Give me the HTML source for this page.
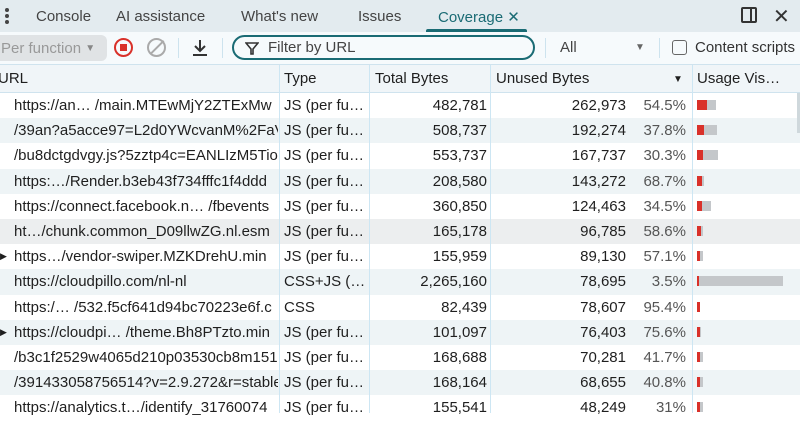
<!DOCTYPE html><html><head><style>
*{margin:0;padding:0;box-sizing:border-box}
body{width:800px;height:413px;overflow:hidden;background:#fff;font-family:"Liberation Sans","DejaVu Sans",sans-serif;font-size:15px;color:#1f1f1f;position:relative}
.abs{position:absolute;white-space:nowrap}
#tabs{position:absolute;left:0;top:0;width:800px;height:32px;background:#e3ebef}
#tb{position:absolute;left:0;top:32px;width:800px;height:33px;background:#f6fafc;border-bottom:1px solid #cfe3ee}
#hdr{position:absolute;left:0;top:65px;width:800px;height:28px;background:#f0f5f8;border-bottom:1px solid #cfe3ee}
.row{position:absolute;left:0;width:800px;height:25.2px}
.row span{position:absolute;top:4px;white-space:nowrap;overflow:hidden}
.vl{position:absolute;top:65px;width:1px;height:348px;background:#cde6f3}
</style></head><body>
<div id="tabs">
<div class="abs" style="left:5px;top:8px;width:4px;height:16px">
<div style="width:4px;height:4px;border-radius:2px;background:#444;margin-bottom:2px"></div><div style="width:4px;height:4px;border-radius:2px;background:#444;margin-bottom:2px"></div><div style="width:4px;height:4px;border-radius:2px;background:#444"></div></div>
<div class="abs" style="left:36px;top:8px;color:#444">Console</div>
<div class="abs" style="left:116px;top:8px;color:#444">AI assistance</div>
<div class="abs" style="left:241px;top:8px;color:#444">What's new</div>
<div class="abs" style="left:358px;top:8px;color:#444">Issues</div>
<div class="abs" style="left:438px;top:8px;color:#1a6b74">Coverage ✕</div>
<div class="abs" style="left:426px;top:29px;width:101px;height:3px;background:#1a6b74;border-radius:2px 2px 0 0"></div>
<div class="abs" style="left:741px;top:7px;width:16px;height:16px;border:2px solid #333;border-radius:2px"><div style="position:absolute;left:7px;top:0;width:2px;height:12px;background:#333"></div></div>
<div class="abs" style="left:773px;top:4px;font-size:20px;color:#333">✕</div>
</div>
<div id="tb">
<div class="abs" style="left:0;top:3px;width:107px;height:26px;background:#e0e3e5;border-radius:0 6px 6px 0;color:#999;padding:5px 0 0 1px">Per function <span style="font-size:10px;color:#888;position:relative;top:-2px">▼</span></div>
<div class="abs" style="left:114px;top:6px;width:19px;height:19px;border:2px solid #d9312a;border-radius:50%"><div style="position:absolute;left:4px;top:4px;width:7px;height:7px;background:#d9312a"></div></div>
<div class="abs" style="left:147px;top:6px;width:19px;height:19px;border:2px solid #aaa;border-radius:50%"><div style="position:absolute;left:7px;top:-2px;width:2px;height:19px;background:#aaa;transform:rotate(45deg)"></div></div>
<div class="abs" style="left:178px;top:6px;width:1px;height:20px;background:#cde3ee"></div>
<svg class="abs" style="left:191px;top:6px" width="18" height="20"><path d="M9 2v11M4 8l5 5 5-5M2 17h14" stroke="#333" stroke-width="2" fill="none"/></svg>
<div class="abs" style="left:222px;top:6px;width:1px;height:20px;background:#cde3ee"></div>
<div class="abs" style="left:232px;top:3px;width:303px;height:25px;border:2px solid #1a6b74;border-radius:13px;padding:2px 0 0 34px;color:#444">Filter by URL</div>
<svg class="abs" style="left:245px;top:9px" width="14" height="14"><path d="M1 2h12L8 8v5H6V8z" stroke="#333" stroke-width="1.6" fill="none"/></svg>
<div class="abs" style="left:545px;top:6px;width:1px;height:20px;background:#cde3ee"></div>
<div class="abs" style="left:560px;top:7px;color:#444">All</div>
<div class="abs" style="left:635px;top:10px;font-size:10px;color:#666">▼</div>
<div class="abs" style="left:659px;top:6px;width:1px;height:20px;background:#cde3ee"></div>
<div class="abs" style="left:672px;top:8px;width:15px;height:15px;border:1.5px solid #666;border-radius:3px"></div>
<div class="abs" style="left:695px;top:7px;color:#333">Content scripts</div>
</div>
<div id="hdr">
<div class="abs" style="left:-2px;top:5px">URL</div>
<div class="abs" style="left:284px;top:5px">Type</div>
<div class="abs" style="left:375px;top:5px">Total Bytes</div>
<div class="abs" style="left:496px;top:5px">Unused Bytes</div>
<div class="abs" style="left:673px;top:9px;font-size:10px">▼</div>
<div class="abs" style="left:697px;top:5px">Usage Vis…</div>
</div>
<div id="rows"></div>
<div class="vl" style="left:279px"></div>
<div class="vl" style="left:369px"></div>
<div class="vl" style="left:490px"></div>
<div class="vl" style="left:692px"></div>
<div class="abs" style="left:797px;top:93px;width:3px;height:40px;background:#cfd8dc"></div>
<script>
var d=[
["https://an…  /main.MTEwMjY2ZTExMw","JS (per fu…","482,781","262,973","54.5%",10,19,0],
["/39an?a5acce97=L2d0YWcvanM%2FaV","JS (per fu…","508,737","192,274","37.8%",7,20,0],
["/bu8dctgdvgy.js?5zztp4c=EANLIzM5Tio","JS (per fu…","553,737","167,737","30.3%",6,21,0],
["https:…/Render.b3eb43f734fffc1f4ddd","JS (per fu…","208,580","143,272","68.7%",5,7,0],
["https://connect.facebook.n…  /fbevents","JS (per fu…","360,850","124,463","34.5%",5,14,0],
["ht…/chunk.common_D09llwZG.nl.esm","JS (per fu…","165,178","96,785","58.6%",4,6,0],
["https…/vendor-swiper.MZKDrehU.min","JS (per fu…","155,959","89,130","57.1%",3,6,1],
["https://cloudpillo.com/nl-nl","CSS+JS (…","2,265,160","78,695","3.5%",2,86,0],
["https:/…  /532.f5cf641d94bc70223e6f.c","CSS","82,439","78,607","95.4%",3,3,0],
["https://cloudpi… /theme.Bh8PTzto.min","JS (per fu…","101,097","76,403","75.6%",3,4,1],
["/b3c1f2529w4065d210p03530cb8m151","JS (per fu…","168,688","70,281","41.7%",3,6,0],
["/391433058756514?v=2.9.272&r=stable","JS (per fu…","168,164","68,655","40.8%",3,6,0],
["https://analytics.t…/identify_31760074","JS (per fu…","155,541","48,249","31%",3,6,0]];
var h="";
d.forEach(function(r,i){
var y=93+i*25.2;var bg=i==5?"#eceeef":(i%2?"#eef4f6":"#fff");
h+='<div class="row" style="top:'+y+'px;background:'+bg+'">'+(r[7]?'<span style="left:0;top:7px;font-size:9px">▶</span>':'')+
'<span style="left:14px;width:264px">'+r[0].replace(/&/g,"&amp;")+'</span><span style="left:284px;width:84px">'+r[1]+'</span><span style="right:313px">'+r[2]+'</span><span style="right:174px">'+r[3]+'</span>'+
'<span style="right:114px;color:#555">'+r[4]+'</span>'+
'<div style="position:absolute;left:697px;top:7px;width:'+r[6]+'px;height:10px;background:#c4c7ca"></div><div style="position:absolute;left:697px;top:7px;width:'+r[5]+'px;height:10px;background:#d9312a"></div></div>';});
document.getElementById("rows").innerHTML=h;
</script>
</body></html>
